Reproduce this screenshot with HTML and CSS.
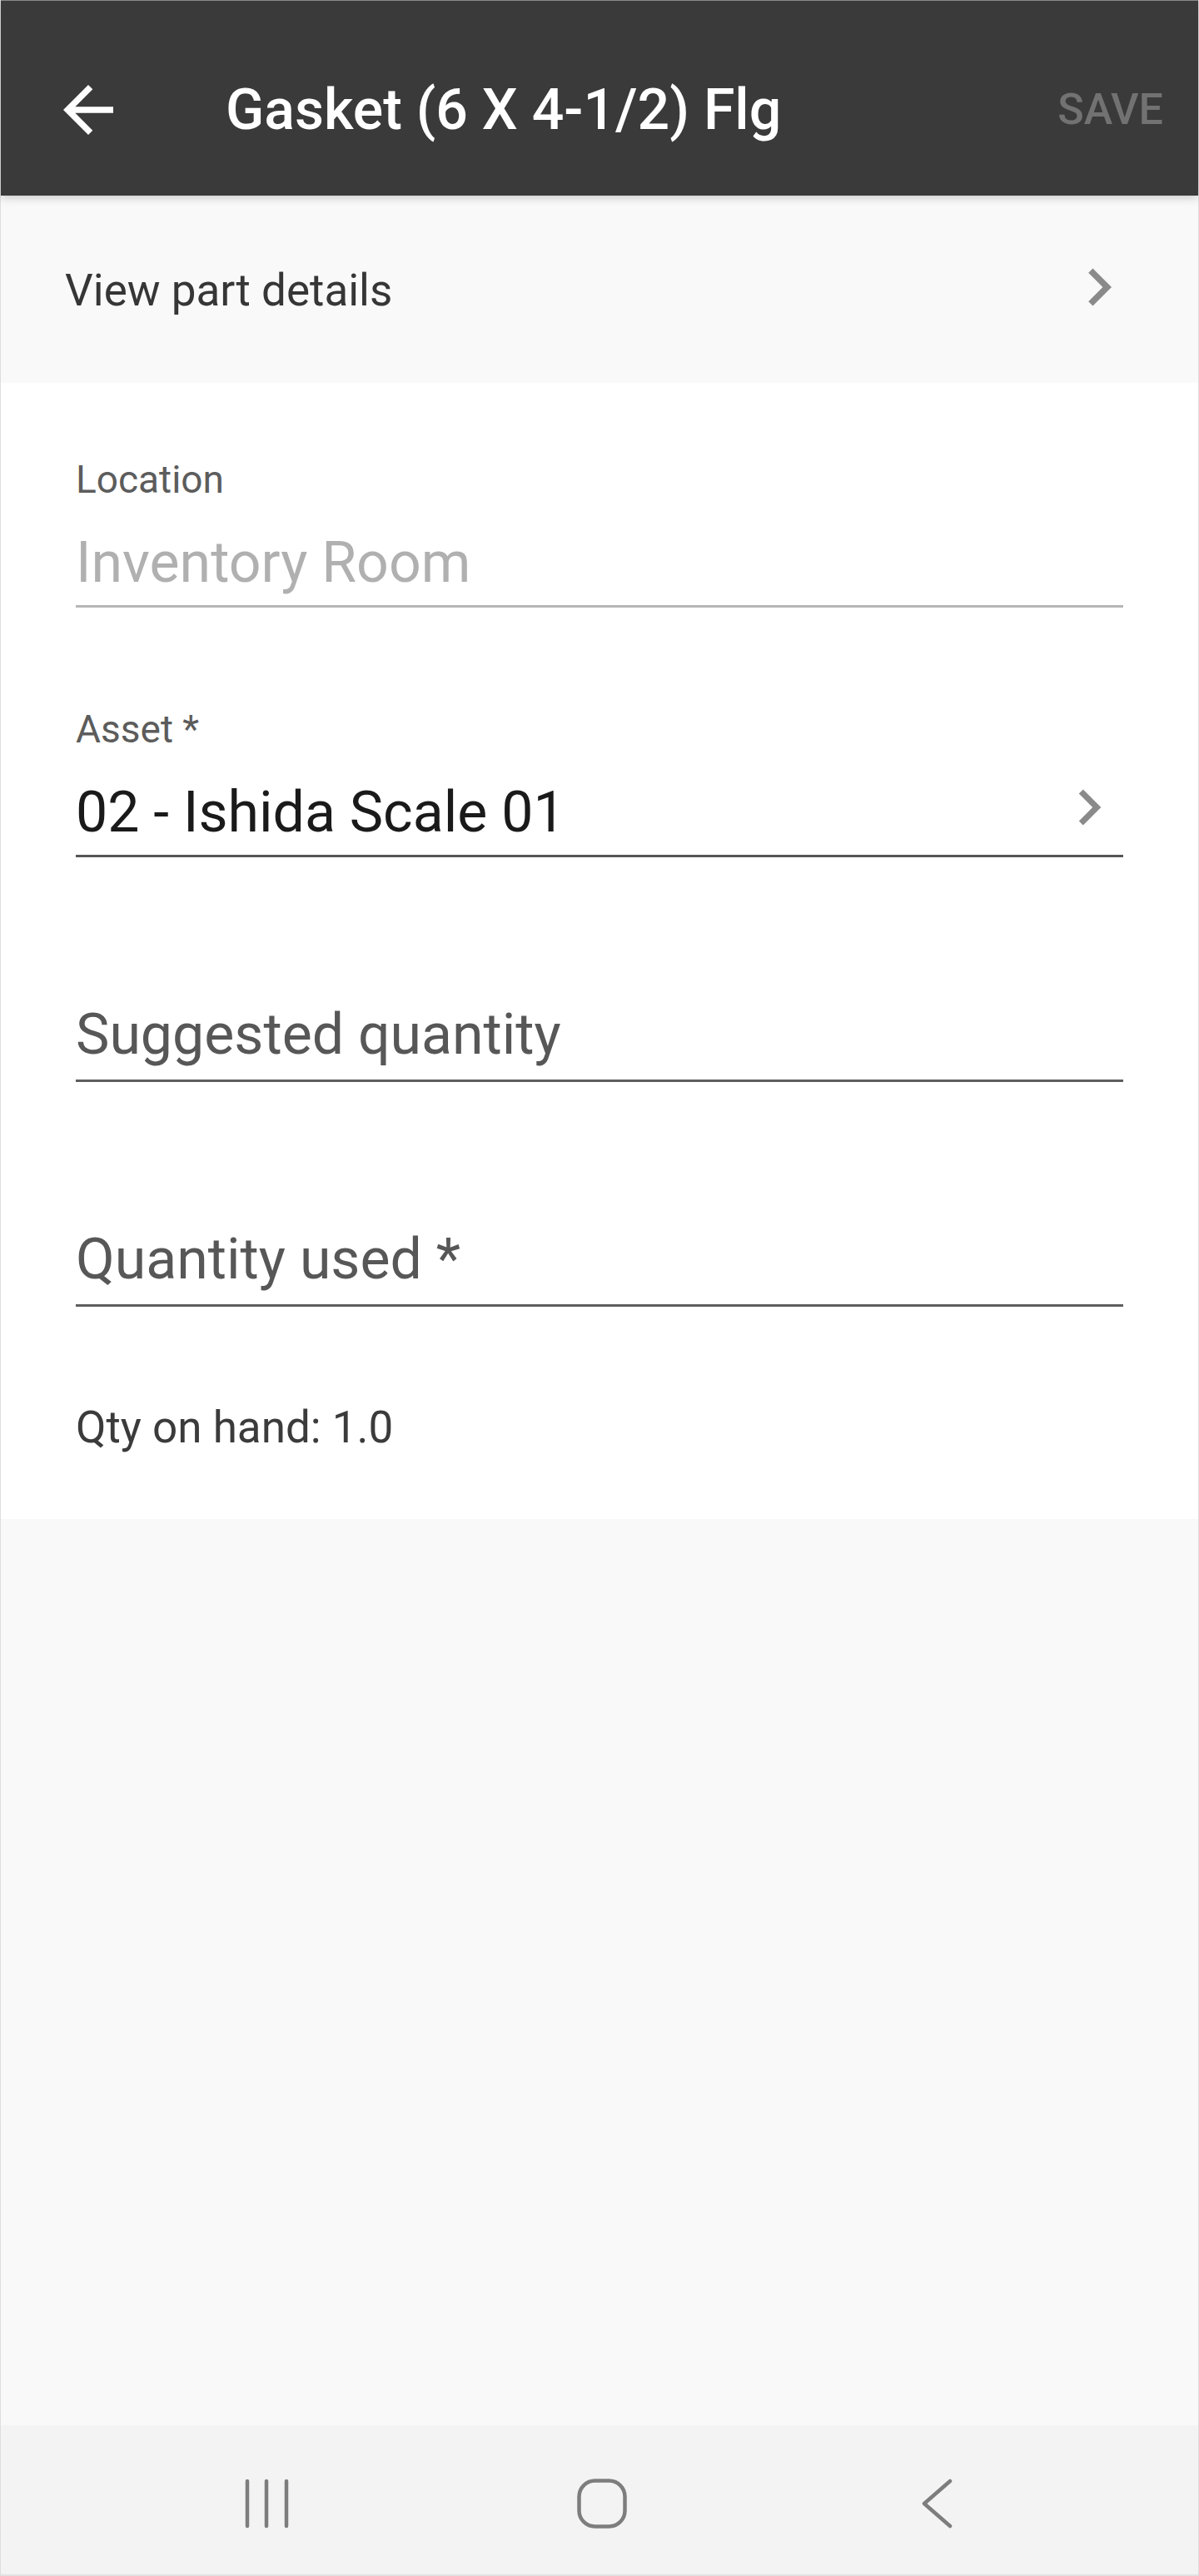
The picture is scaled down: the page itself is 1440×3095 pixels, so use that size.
FILE: index.html
```html
<!DOCTYPE html>
<html lang="en">
<head>
    <meta charset="UTF-8">
    <meta name="viewport" content="width=device-width, initial-scale=1">
    <title>Gasket (6 X 4-1/2) Flg</title>
    <link rel="stylesheet" href="styles.css">
</head>
<body>
<div class="screen">

    <!-- Toolbar -->
    <header class="app-bar">
        <svg class="back-arrow" viewBox="0 0 24 24" width="90" height="90">
            <path d="M20 11H7.83l5.59-5.59L12 4l-8 8 8 8 1.41-1.41L7.83 13H20v-2z" fill="#ffffff"/>
        </svg>
        <h1 class="title">Gasket (6 X 4-1/2) Flg</h1>
        <span class="save">SAVE</span>
    </header>

    <!-- Link to part details -->
    <div class="details-row">
        <span class="details-text">View part details</span>
        <svg class="details-chevron" viewBox="0 0 24 24" width="90" height="90">
            <path d="M10 6L8.59 7.41 13.17 12l-4.58 4.59L10 18l6-6z" fill="#8a8a8a"/>
        </svg>
    </div>

    <!-- Form -->
    <section class="form">
        <div class="field field-first">
            <div class="field-label">Location</div>
            <div class="field-value disabled">Inventory Room</div>
        </div>

        <div class="field">
            <div class="field-label">Asset *</div>
            <div class="field-value picker">
                <span>02 - Ishida Scale 01</span>
                <svg class="picker-chevron" viewBox="0 0 24 24" width="86" height="86">
                    <path d="M10 6L8.59 7.41 13.17 12l-4.58 4.59L10 18l6-6z" fill="#8a8a8a"/>
                </svg>
            </div>
        </div>

        <div class="field field-hint">
            <div class="field-value hint">Suggested quantity</div>
        </div>

        <div class="field field-hint">
            <div class="field-value hint">Quantity used *</div>
        </div>

        <p class="on-hand">Qty on hand: 1.0</p>
    </section>

    <div class="filler"></div>

    <!-- System navigation -->
    <nav class="nav-bar">
        <svg class="nav-icon" viewBox="0 0 60 60" width="60" height="60">
            <g stroke="#7d7d7d" stroke-width="4.5" stroke-linecap="round">
                <line x1="7" y1="3" x2="7" y2="57"/>
                <line x1="30" y1="3" x2="30" y2="57"/>
                <line x1="54" y1="3" x2="54" y2="57"/>
            </g>
        </svg>
        <svg class="nav-icon" viewBox="0 0 60 60" width="60" height="60">
            <rect x="2.5" y="2.5" width="55" height="55" rx="19" fill="none" stroke="#7d7d7d" stroke-width="4.5"/>
        </svg>
        <svg class="nav-icon" viewBox="0 0 60 60" width="60" height="60">
            <polyline points="45,3 14,30 45,57" fill="none" stroke="#7d7d7d" stroke-width="4.5" stroke-linecap="round" stroke-linejoin="round"/>
        </svg>
    </nav>

</div>
</body>
</html>
```

FILE: styles.css
```css
body {
    margin: 0;
    padding: 0;
    background-color: #ffffff;
    font-family: Roboto, "Noto Sans", sans-serif;
}

.screen {
    box-sizing: border-box;
    width: 1440px;
    height: 3095px;
    display: flex;
    flex-direction: column;
    border-left: 1px solid #dedede;
    border-right: 1px solid #dedede;
    background-color: #f9f9f9;
}

/* Toolbar */
.app-bar {
    box-sizing: border-box;
    height: 235px;
    flex-shrink: 0;
    display: flex;
    align-items: center;
    padding: 27px 42px 0 60px;
    border-top: 1px solid #8a8a8a;
    background-color: #3a3a3a;
    box-shadow: 0 3px 10px rgba(0, 0, 0, 0.18);
    position: relative;
    z-index: 1;
}

.back-arrow {
    flex-shrink: 0;
    margin-right: 120px;
}

.title {
    flex: 1;
    margin: 0;
    font-size: 68px;
    line-height: 70px;
    font-weight: 500;
    color: #ffffff;
}

.save {
    font-size: 52px;
    line-height: 52px;
    font-weight: 500;
    color: #727272;
}

/* Part details row */
.details-row {
    box-sizing: border-box;
    height: 225px;
    flex-shrink: 0;
    display: flex;
    align-items: center;
    justify-content: space-between;
    padding: 4px 74px 0 77px;
    background-color: #f9f9f9;
}

.details-text {
    font-size: 53px;
    line-height: 53px;
    color: #363636;
}

.details-chevron {
    margin-bottom: 9px;
}

/* Form */
.form {
    flex-shrink: 0;
    padding: 93px 90px 0;
    background-color: #ffffff;
}

.field {
    margin-top: 123px;
}

.field-first {
    margin-top: 0;
}

.field-hint {
    margin-top: 173px;
}

.field-label {
    font-size: 46px;
    line-height: 46px;
    color: #5c5c5c;
    margin-bottom: 37px;
}

.field-value {
    font-size: 68px;
    line-height: 80px;
    color: #1a1a1a;
    padding-bottom: 11px;
    border-bottom: 3px solid #555555;
}

.field-value.disabled {
    color: #b0b0b0;
    border-bottom-color: #b6b6b6;
}

.field-value.hint {
    color: #575757;
    padding-bottom: 14px;
    border-bottom-color: #5e5e5e;
}

.picker {
    display: flex;
    justify-content: space-between;
}

.picker-chevron {
    align-self: flex-start;
    margin-top: -9px;
    margin-right: -2px;
}

.on-hand {
    margin: 119px 0 0;
    padding-bottom: 83px;
    font-size: 53px;
    line-height: 53px;
    color: #3b3b3b;
}

.filler {
    flex: 1;
    background-color: #f9f9f9;
}

/* Android navigation bar */
.nav-bar {
    box-sizing: border-box;
    height: 181px;
    flex-shrink: 0;
    display: flex;
    align-items: center;
    gap: 343px;
    padding: 8px 0 0 289px;
    background-color: #f3f3f3;
    border-bottom: 2px solid #e2e2e2;
}

.nav-icon {
    flex-shrink: 0;
}
```
